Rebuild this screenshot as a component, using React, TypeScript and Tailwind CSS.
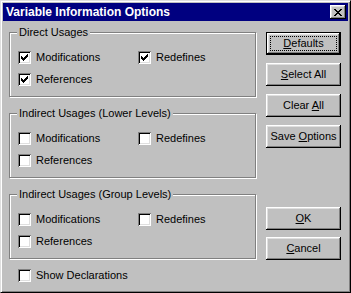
import React from "react";

const raised =
  "bg-[#c0c0c0] shadow-[inset_-1px_-1px_0_#000,inset_1px_1px_0_#fff,inset_-2px_-2px_0_#808080,inset_2px_2px_0_#dfdfdf]";

function CheckMark() {
  return (
    <svg width="7" height="7" viewBox="0 0 7 7" shapeRendering="crispEdges">
      <path
        fill="#000"
        d="M6 0h1v1h-1zM5 1h2v1h-2zM0 2h1v1h-1zM4 2h3v1h-3zM0 3h2v1h-2zM3 3h3v1h-3zM0 4h5v1h-5zM1 5h3v1h-3zM2 6h1v1h-1z"
      />
    </svg>
  );
}

function Checkbox({ label, checked = false }: { label: string; checked?: boolean }) {
  return (
    <div className="flex items-center h-[13px]">
      <div className="w-[13px] h-[13px] bg-white shrink-0 flex items-center justify-center shadow-[inset_1px_1px_0_#808080,inset_-1px_-1px_0_#fff,inset_2px_2px_0_#000,inset_-2px_-2px_0_#dfdfdf]">
        {checked && <CheckMark />}
      </div>
      <span className="ml-[5px] leading-[13px] whitespace-nowrap">{label}</span>
    </div>
  );
}

function Group({
  title,
  checked,
  className = "",
}: {
  title: string;
  checked: boolean;
  className?: string;
}) {
  return (
    <div
      className={`relative h-[65px] border border-[#808080] shadow-[inset_1px_1px_0_#fff,1px_1px_0_#fff] ${className}`}
    >
      <span className="absolute left-[7px] -top-[7px] px-[2px] bg-[#c0c0c0] leading-[13px] whitespace-nowrap">
        {title}
      </span>
      <div className="grid grid-cols-[120px_1fr] gap-y-[9px] pl-[8px] pt-[18px]">
        <Checkbox label="Modifications" checked={checked} />
        <Checkbox label="Redefines" checked={checked} />
        <Checkbox label="References" checked={checked} />
      </div>
    </div>
  );
}

function Button({
  children,
  focused = false,
  className = "",
}: {
  children: React.ReactNode;
  focused?: boolean;
  className?: string;
}) {
  if (focused) {
    return (
      <div className={`w-[75px] h-[23px] border border-black ${className}`}>
        <div className={`w-full h-full p-[3px] ${raised}`}>
          <div className="w-full h-full border border-dotted border-black flex items-center justify-center leading-[13px]">
            {children}
          </div>
        </div>
      </div>
    );
  }
  return (
    <div
      className={`w-[75px] h-[23px] flex items-center justify-center leading-[13px] ${raised} ${className}`}
    >
      {children}
    </div>
  );
}

export default function App() {
  return (
    <div className="w-[351px] h-[293px] bg-[#c0c0c0] border border-t-[#dfdfdf] border-l-[#dfdfdf] border-r-black border-b-black shadow-[inset_1px_1px_0_#fff,inset_-1px_-1px_0_#808080] p-[2px] font-['Liberation_Sans',Arial,sans-serif] text-[11px] text-black select-none">
      <div className="h-[18px] bg-[#000080] flex items-center justify-between pl-[3px] pr-[2px]">
        <span className="text-white font-bold text-[12px] leading-[14px] whitespace-nowrap">
          Variable Information Options
        </span>
        <div className={`w-[16px] h-[14px] flex items-center justify-center ${raised}`}>
          <svg width="8" height="7" viewBox="0 0 8 7" shapeRendering="crispEdges">
            <path
              fill="#000"
              d="M0 0h2v1h-2zM6 0h2v1h-2zM1 1h2v1h-2zM5 1h2v1h-2zM2 2h4v1h-4zM3 3h2v1h-2zM2 4h4v1h-4zM1 5h2v1h-2zM5 5h2v1h-2zM0 6h2v1h-2zM6 6h2v1h-2z"
            />
          </svg>
        </div>
      </div>

      <div className="flex pl-[6px] pt-[11px]">
        <div className="w-[247px]">
          <Group title="Direct Usages" checked />
          <Group title="Indirect Usages (Lower Levels)" checked={false} className="mt-[16px]" />
          <Group title="Indirect Usages (Group Levels)" checked={false} className="mt-[16px]" />
          <div className="pl-[9px] mt-[10px]">
            <Checkbox label="Show Declarations" />
          </div>
        </div>

        <div className="ml-[10px] flex flex-col">
          <Button focused>
            <span>
              <u>D</u>efaults
            </span>
          </Button>
          <Button className="mt-[8px]">
            <span>
              <u>S</u>elect All
            </span>
          </Button>
          <Button className="mt-[8px]">
            <span>
              Clear <u>A</u>ll
            </span>
          </Button>
          <Button className="mt-[8px]">
            <span>
              Save <u>O</u>ptions
            </span>
          </Button>
          <Button className="mt-[59px]">
            <span>
              <u>O</u>K
            </span>
          </Button>
          <Button className="mt-[7px]">
            <span>
              <u>C</u>ancel
            </span>
          </Button>
        </div>
      </div>
    </div>
  );
}
